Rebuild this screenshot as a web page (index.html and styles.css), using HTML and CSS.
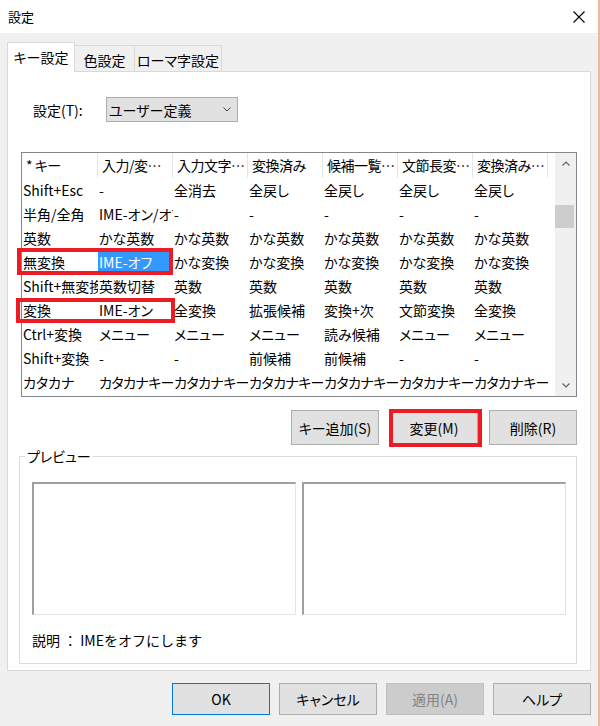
FILE: index.html
```html
<!DOCTYPE html>
<html lang="ja">

<head>
    <meta charset="UTF-8">
    <meta name="viewport" content="width=device-width, initial-scale=1.0">
    <title>設定</title>
    <link rel="stylesheet" href="styles.css">
</head>

<body>
    <div class="window">
        <div class="titlebar">
            <span class="title">設定</span>
            <button class="close" aria-label="閉じる">
                <svg width="12" height="12" viewBox="0 0 12 12">
                    <path d="M0.5 0.5 L11.5 11.5 M11.5 0.5 L0.5 11.5" stroke="#000" stroke-width="1.1" fill="none" />
                </svg>
            </button>
        </div>

        <div class="content">
            <div class="tabs">
                <div class="tab active">キー設定</div>
                <div class="tab">色設定</div>
                <div class="tab">ローマ字設定</div>
            </div>

            <div class="panel">
                <div class="setting-row">
                    <label class="setting-label">設定(T):</label>
                    <div class="combo">
                        <span>ユーザー定義</span>
                        <svg width="8" height="5" viewBox="0 0 8 5">
                            <path d="M0.5 0.5 L4 4 L7.5 0.5" stroke="#444" stroke-width="1" fill="none" />
                        </svg>
                    </div>
                </div>

                <div class="list-wrap">
                    <div class="list">
                        <div class="grid">
                            <div class="list-head">
                                <div class="hcell">* キー</div>
                                <div class="hcell">入力/変換済み文字なし</div>
                                <div class="hcell">入力文字のみ</div>
                                <div class="hcell">変換済み</div>
                                <div class="hcell">候補一覧表示中</div>
                                <div class="hcell">文節長変更中</div>
                                <div class="hcell">変換済み文節内</div>
                            </div>
                            <div class="row">
                                <div class="cell">Shift+Esc</div>
                                <div class="cell">-</div>
                                <div class="cell">全消去</div>
                                <div class="cell">全戻し</div>
                                <div class="cell">全戻し</div>
                                <div class="cell">全戻し</div>
                                <div class="cell">全戻し</div>
                            </div>
                            <div class="row">
                                <div class="cell">半角/全角</div>
                                <div class="cell">IME-オン/オフ</div>
                                <div class="cell">-</div>
                                <div class="cell">-</div>
                                <div class="cell">-</div>
                                <div class="cell">-</div>
                                <div class="cell">-</div>
                            </div>
                            <div class="row">
                                <div class="cell">英数</div>
                                <div class="cell">かな英数</div>
                                <div class="cell">かな英数</div>
                                <div class="cell">かな英数</div>
                                <div class="cell">かな英数</div>
                                <div class="cell">かな英数</div>
                                <div class="cell">かな英数</div>
                            </div>
                            <div class="row">
                                <div class="cell">無変換</div>
                                <div class="cell selected">IME-オフ</div>
                                <div class="cell">かな変換</div>
                                <div class="cell">かな変換</div>
                                <div class="cell">かな変換</div>
                                <div class="cell">かな変換</div>
                                <div class="cell">かな変換</div>
                            </div>
                            <div class="row">
                                <div class="cell">Shift+無変換</div>
                                <div class="cell">英数切替</div>
                                <div class="cell">英数</div>
                                <div class="cell">英数</div>
                                <div class="cell">英数</div>
                                <div class="cell">英数</div>
                                <div class="cell">英数</div>
                            </div>
                            <div class="row">
                                <div class="cell">変換</div>
                                <div class="cell">IME-オン</div>
                                <div class="cell">全変換</div>
                                <div class="cell">拡張候補</div>
                                <div class="cell">変換+次</div>
                                <div class="cell">文節変換</div>
                                <div class="cell">全変換</div>
                            </div>
                            <div class="row">
                                <div class="cell">Ctrl+変換</div>
                                <div class="cell">メニュー</div>
                                <div class="cell">メニュー</div>
                                <div class="cell">メニュー</div>
                                <div class="cell">読み候補</div>
                                <div class="cell">メニュー</div>
                                <div class="cell">メニュー</div>
                            </div>
                            <div class="row">
                                <div class="cell">Shift+変換</div>
                                <div class="cell">-</div>
                                <div class="cell">-</div>
                                <div class="cell">前候補</div>
                                <div class="cell">前候補</div>
                                <div class="cell">-</div>
                                <div class="cell">-</div>
                            </div>
                            <div class="row">
                                <div class="cell">カタカナ</div>
                                <div class="cell kana">カタカナキー</div>
                                <div class="cell kana">カタカナキー</div>
                                <div class="cell kana">カタカナキー</div>
                                <div class="cell kana">カタカナキー</div>
                                <div class="cell kana">カタカナキー</div>
                                <div class="cell kana">カタカナキー</div>
                            </div>
                        </div>

                        <div class="scrollbar">
                            <svg class="arrow" width="8" height="5" viewBox="0 0 8 5">
                                <path d="M0.5 4.5 L4 1 L7.5 4.5" stroke="#606060" stroke-width="1.2" fill="none" />
                            </svg>
                            <div class="track">
                                <div class="thumb"></div>
                            </div>
                            <svg class="arrow" width="8" height="5" viewBox="0 0 8 5">
                                <path d="M0.5 0.5 L4 4 L7.5 0.5" stroke="#606060" stroke-width="1.2" fill="none" />
                            </svg>
                        </div>
                    </div>

                    <!-- red marks drawn over the list -->
                    <div class="mark mark-muhenkan"></div>
                    <div class="mark mark-henkan"></div>
                </div>

                <div class="list-buttons">
                    <button class="btn">キー追加(S)</button>
                    <button class="btn marked">変更(M)</button>
                    <button class="btn">削除(R)</button>
                </div>

                <div class="group">
                    <span class="group-label">プレビュー</span>
                    <div class="preview-row">
                        <div class="preview-box"></div>
                        <div class="preview-box"></div>
                    </div>
                    <p class="description">説明 ： IMEをオフにします</p>
                </div>
            </div>

            <div class="dialog-buttons">
                <button class="btn dlg default">OK</button>
                <button class="btn dlg">キャンセル</button>
                <button class="btn dlg" disabled>適用(A)</button>
                <button class="btn dlg">ヘルプ</button>
            </div>
        </div>
    </div>
</body>

</html>
```

FILE: styles.css
```css
/* General */
*,
*::before,
*::after {
    box-sizing: border-box;
}

body {
    margin: 0;
    padding: 0;
    font-family: "Noto Sans CJK JP", "Noto Sans", sans-serif;
    font-size: 14px;
    font-feature-settings: "palt";
    color: #000;
}

.window {
    width: 600px;
    height: 726px;
    background-color: #f0f0f0;
    border-right: 2px solid #eeb8a0;
    overflow: hidden;
}

/* Title bar */
.titlebar {
    height: 33px;
    background-color: #fff;
    display: flex;
    justify-content: space-between;
    align-items: center;
    padding: 0 13px 0 8px;
}

.title {
    font-size: 13px;
}

.close {
    width: 12px;
    height: 12px;
    padding: 0;
    border: none;
    background: none;
    display: flex;
}

.content {
    padding: 9px 0 0 7px;
}

/* Tabs */
.tabs {
    display: flex;
    align-items: flex-end;
}

.tab {
    height: 26px;
    display: flex;
    align-items: center;
    justify-content: center;
    white-space: nowrap;
    background-color: #f0f0f0;
    border: 1px solid #d9d9d9;
    border-bottom: none;
    margin-left: -1px;
    padding-top: 2px;
}

.tab:nth-child(2) {
    width: 61px;
}

.tab:nth-child(3) {
    width: 88px;
}

.tab.active {
    width: 68px;
    height: 30px;
    margin-left: 0;
    margin-bottom: -1px;
    padding-top: 0;
    padding-bottom: 1px;
    background-color: #fff;
    position: relative;
    z-index: 1;
}

.panel {
    width: 584px;
    height: 600px;
    background-color: #fff;
    border: 1px solid #d9d9d9;
}

/* Setting combo */
.setting-row {
    display: flex;
    align-items: center;
    margin-top: 25px;
    padding-left: 25px;
}

.setting-label {
    width: 73px;
}

.combo {
    width: 132px;
    height: 25px;
    display: flex;
    align-items: center;
    justify-content: space-between;
    padding: 0 6px 0 2px;
    background-color: #e1e1e1;
    border: 1px solid #adadad;
}

/* Key list */
.list-wrap {
    position: relative;
    width: 556px;
    height: 245px;
    margin: 30px 0 0 13px;
}

.list {
    display: flex;
    height: 100%;
    border: 1px solid #828790;
    overflow: hidden;
}

.grid {
    flex: 1;
    overflow: hidden;
}

.list-head,
.row {
    display: flex;
}

.list-head {
    height: 25px;
}

.hcell,
.cell {
    flex: 0 0 75px;
    white-space: nowrap;
    overflow: hidden;
}

.hcell:first-child,
.cell:first-child {
    flex-basis: 76px;
}

.hcell {
    line-height: 25px;
    padding: 0 1px 0 4px;
    border-right: 1px solid #e5e5e5;
    text-overflow: ellipsis;
    letter-spacing: -0.5px;
}

.row {
    height: 24px;
}

.cell {
    line-height: 24px;
    padding-left: 1px;
}

.cell.kana {
    letter-spacing: -0.6px;
}

.cell.selected {
    background-color: #3399ff;
    color: #fff;
    height: 23px;
}

.scrollbar {
    width: 21px;
    background-color: #f0f0f0;
    display: flex;
    flex-direction: column;
    align-items: center;
}

.scrollbar .arrow {
    margin: 8px 0;
}

.track {
    flex: 1;
    width: 100%;
}

.thumb {
    width: 19px;
    height: 23px;
    margin-top: 31px;
    background-color: #cdcdcd;
}

.mark {
    position: absolute;
    border: 4px solid #ed1c24;
}

.mark-muhenkan {
    left: -4px;
    top: 96px;
    width: 156px;
    height: 27px;
}

.mark-henkan {
    left: -5px;
    top: 146px;
    width: 159px;
    height: 25px;
}

/* Buttons */
.btn {
    font: inherit;
    color: #000;
    background-color: #e1e1e1;
    border: 1px solid #adadad;
    padding: 0;
    white-space: nowrap;
}

.list-buttons {
    display: flex;
    justify-content: flex-end;
    gap: 11px;
    width: 569px;
    margin-top: 13px;
}

.list-buttons .btn {
    width: 88px;
    height: 35px;
}

.btn.marked {
    position: relative;
}

.btn.marked::after {
    content: "";
    position: absolute;
    left: -2px;
    top: -2px;
    width: 93px;
    height: 38px;
    border: 4px solid #ed1c24;
}

/* Preview group */
.group {
    position: relative;
    width: 558px;
    height: 208px;
    margin: 11px 0 0 11px;
    border: 1px solid #dcdcdc;
}

.group-label {
    position: absolute;
    left: 5px;
    top: -10px;
    padding: 0 2px;
    line-height: 18px;
    background-color: #fff;
}

.preview-row {
    display: flex;
    gap: 6px;
    margin-top: 25px;
    padding-left: 12px;
}

.preview-box {
    width: 264px;
    height: 133px;
    border: 1px solid #e3e3e3;
    border-top: 2px solid #a0a0a0;
    border-left: 2px solid #a0a0a0;
}

.description {
    margin: 16px 0 0 12px;
    line-height: 18px;
    font-feature-settings: normal;
}

/* Dialog buttons */
.dialog-buttons {
    display: flex;
    justify-content: flex-end;
    gap: 9px;
    margin-top: 12px;
    padding-right: 7px;
}

.btn.dlg {
    width: 98px;
    height: 32px;
}

.btn.default {
    border-color: #0078d7;
}

.btn:disabled {
    background-color: #cccccc;
    border-color: #bfbfbf;
    color: #838383;
}
```
